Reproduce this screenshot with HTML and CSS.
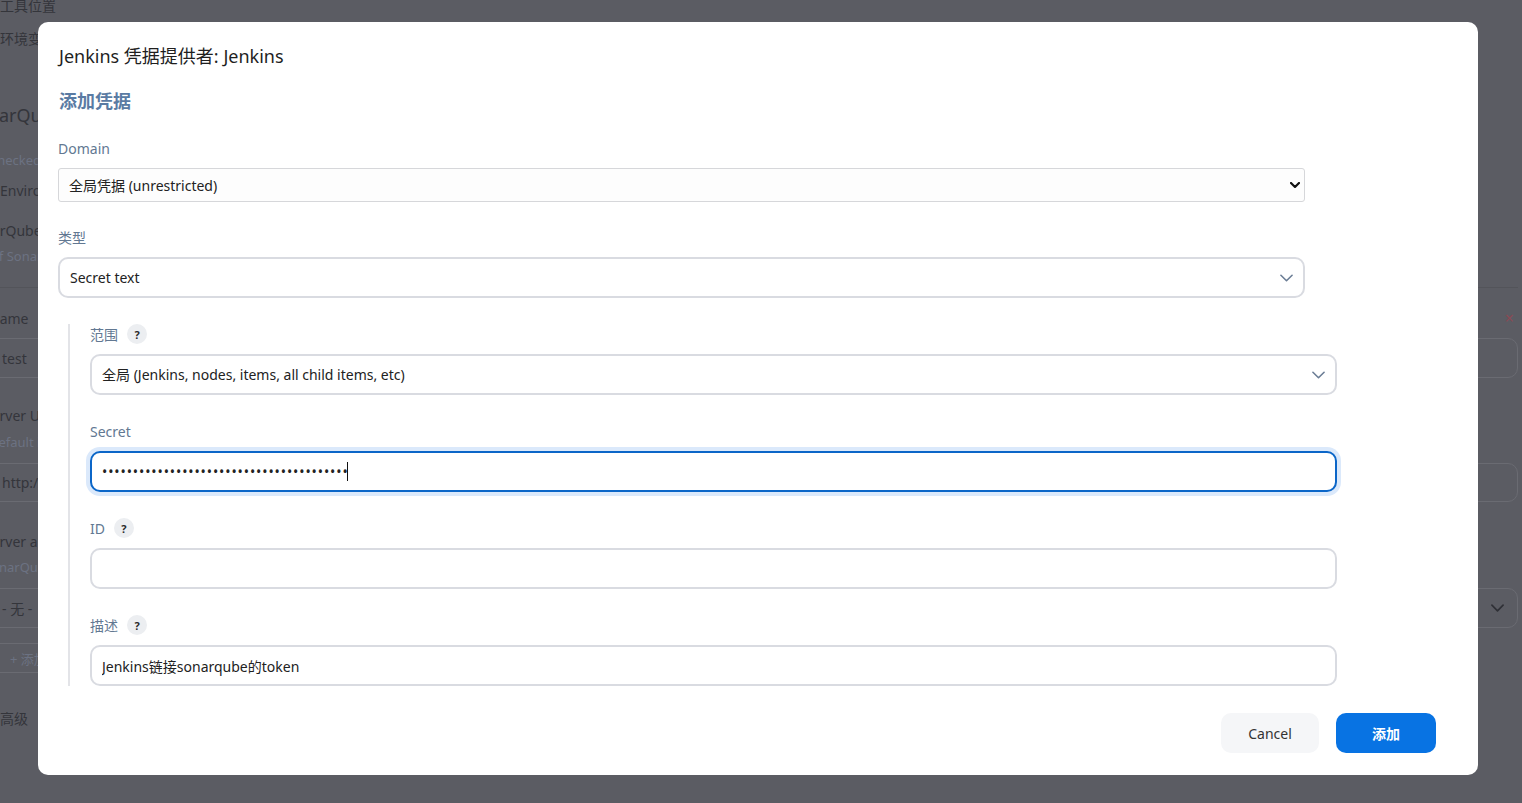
FILE: index.html
```html
<!DOCTYPE html>
<html lang="zh-CN">
<head>
    <meta charset="UTF-8">
    <meta name="viewport" content="width=device-width, initial-scale=1.0">
    <title>添加凭据</title>
    <link rel="stylesheet" href="styles.css">
</head>
<body>
    <!-- 背景のJenkins設定ページ（モーダルの下） -->
    <div class="page">
        <div class="bg-row row-tools"><span class="bg-label">工具位置</span></div>
        <div class="bg-row row-env"><span class="bg-label">环境变量</span></div>
        <div class="bg-row row-sonar"><span class="bg-title cut-l">SonarQube servers</span></div>
        <div class="bg-row row-checked"><span class="bg-desc cut-xs">checked, these</span></div>
        <div class="bg-row row-environ"><span class="bg-label">Environment variables</span></div>
        <div class="bg-row row-install"><span class="bg-label cut-l">SonarQube installations</span></div>
        <div class="bg-row row-list"><span class="bg-desc cut-xs">of SonarQube</span></div>
        <div class="bg-divider"></div>
        <div class="bg-row row-name">
            <span class="bg-label cut-s">Name</span>
            <span class="bg-close">×</span>
        </div>
        <div class="bg-row row-box">
            <span class="bg-box left">test</span>
            <span class="bg-box right"></span>
        </div>
        <div class="bg-row row-url"><span class="bg-label cut-m">Server URL</span></div>
        <div class="bg-row row-default"><span class="bg-desc cut-s">Default is</span></div>
        <div class="bg-row row-box2">
            <span class="bg-box left">http://</span>
            <span class="bg-box right"></span>
        </div>
        <div class="bg-row row-token"><span class="bg-label cut-m">Server authentication token</span></div>
        <div class="bg-row row-token-desc"><span class="bg-desc cut-m">SonarQube authentication</span></div>
        <div class="bg-row row-box3">
            <span class="bg-box left">- 无 -</span>
            <span class="bg-box right">
                <svg width="13" height="8" viewBox="0 0 14 8"><path d="M1 1l6 6 6-6" fill="none" stroke="#2f3036" stroke-width="1.8" stroke-linecap="round" stroke-linejoin="round"/></svg>
            </span>
        </div>
        <div class="bg-row row-add"><span class="bg-btn">+ 添加</span></div>
        <div class="bg-row row-adv"><span class="bg-label">高级</span></div>
    </div>

    <div class="dialog">
        <h1 class="dialog-title">Jenkins 凭据提供者: Jenkins</h1>
        <h2 class="dialog-heading">添加凭据</h2>

        <div class="field">
            <div class="field-label">Domain</div>
            <div class="select-wrap">
                <select class="plain-select">
                    <option>全局凭据 (unrestricted)</option>
                </select>
                <svg class="chevron-bold" width="10" height="6" viewBox="0 0 10 6"><path d="M1 1l4 4 4-4" fill="none" stroke="#111" stroke-width="2.2" stroke-linecap="round" stroke-linejoin="round"/></svg>
            </div>
        </div>

        <div class="field">
            <div class="field-label">类型</div>
            <div class="select-wrap">
                <select class="select">
                    <option>Secret text</option>
                </select>
                <svg class="chevron" width="13" height="8" viewBox="0 0 14 8"><path d="M1 1l6 6 6-6" fill="none" stroke="#6b7d95" stroke-width="1.7" stroke-linecap="round" stroke-linejoin="round"/></svg>
            </div>
        </div>

        <div class="nested">
            <div class="field">
                <div class="field-label">范围 <span class="help">?</span></div>
                <div class="select-wrap">
                    <select class="select">
                        <option>全局 (Jenkins, nodes, items, all child items, etc)</option>
                    </select>
                    <svg class="chevron" width="13" height="8" viewBox="0 0 14 8"><path d="M1 1l6 6 6-6" fill="none" stroke="#6b7d95" stroke-width="1.7" stroke-linecap="round" stroke-linejoin="round"/></svg>
                </div>
            </div>

            <div class="field">
                <div class="field-label">Secret</div>
                <div class="input-wrap">
                    <input class="input is-focused" type="password" value="sqa_3f9c2a7d1e8b4c6f0a5d9e2b7c1f4a8d6e3b">
                    <span class="caret"></span>
                </div>
            </div>

            <div class="field">
                <div class="field-label">ID <span class="help">?</span></div>
                <input class="input" type="text" value="">
            </div>

            <div class="field last">
                <div class="field-label">描述 <span class="help">?</span></div>
                <input class="input" type="text" value="Jenkins链接sonarqube的token">
            </div>
        </div>

        <div class="dialog-buttons">
            <button class="btn btn-cancel">Cancel</button>
            <button class="btn btn-primary">添加</button>
        </div>
    </div>
</body>
</html>
```

FILE: styles.css
```css
* {
    box-sizing: border-box;
}

body {
    margin: 0;
    height: 803px;
    overflow: hidden;
    position: relative;
    background-color: #5b5c63;
    font-family: "Noto Sans", "Noto Sans CJK SC", sans-serif;
    font-size: 14px;
}

/* 背景ページ */
.page {
    padding-right: 4px;
}

.bg-row {
    display: flex;
    justify-content: space-between;
    align-items: center;
    height: 24px;
    white-space: nowrap;
    color: #34353b;
}

.bg-label {
    font-size: 14px;
}

.bg-title {
    font-size: 18px;
}

.bg-desc {
    font-size: 13px;
    color: #6c7282;
}

.cut-xs { margin-left: -9px; }
.cut-s { margin-left: -11px; }
.cut-m { margin-left: -16px; }
.cut-l { margin-left: -33px; }

.row-tools { margin-top: -7px; }
.row-env { margin-top: 9px; }
.row-sonar { margin-top: 53px; }
.row-checked { margin-top: 21px; }
.row-environ { margin-top: 6px; }
.row-install { margin-top: 16px; }
.row-list { margin-top: 2px; }
.row-name { margin-top: 18px; }
.row-url { margin-top: 25px; }
.row-default { margin-top: 3px; }
.row-token { margin-top: 27px; }
.row-token-desc { margin-top: 2px; }
.row-add { margin-top: 15px; height: 30px; }
.row-adv { margin-top: 33px; }

.row-box, .row-box2, .row-box3 {
    height: 40px;
}

.row-box { margin-top: 8px; }
.row-box2 { margin-top: 9px; height: 39px; }
.row-box3 { margin-top: 9px; }

.bg-divider {
    margin-top: 19px;
    height: 1px;
    background-color: #53545a;
}

.bg-close {
    color: #8a4a55;
    font-size: 16px;
    margin-right: 4px;
}

.bg-box {
    height: 100%;
    width: 220px;
    display: flex;
    align-items: center;
    border: 1px solid #6a6b72;
    border-radius: 10px;
}

.bg-box.left {
    margin-left: -30px;
    padding-left: 31px;
}

.bg-box.right {
    justify-content: flex-end;
    padding-right: 13px;
}

.bg-btn {
    height: 100%;
    width: 200px;
    margin-left: -20px;
    padding-left: 30px;
    display: flex;
    align-items: center;
    border-top: 1px solid #6a6b72;
    border-bottom: 1px solid #6a6b72;
    color: #6c7282;
    font-size: 13px;
}

/* ダイアログ */
.dialog {
    position: absolute;
    left: 38px;
    top: 22px;
    width: 1440px;
    height: 753px;
    background-color: #fff;
    border-radius: 10px;
    padding: 22px 42px 22px 20px;
}

.dialog-title {
    margin: 0 0 21px 1px;
    font-size: 18px;
    line-height: 24px;
    font-weight: 400;
    color: #1f1f1f;
}

.dialog-heading {
    margin: 0 0 25px 1px;
    font-size: 18px;
    line-height: 24px;
    font-weight: 700;
    color: #5a7ba3;
}

.field {
    width: 1247px;
    margin-bottom: 25px;
}

.nested .field {
    margin-bottom: 26px;
}

.nested .field.last {
    margin-bottom: 0;
}

.field-label {
    display: flex;
    align-items: center;
    gap: 9px;
    height: 20px;
    margin-bottom: 10px;
    color: #627892;
    font-size: 14px;
}

.help {
    width: 20px;
    height: 20px;
    border-radius: 50%;
    background-color: #eceef1;
    color: #2a2a2a;
    font-size: 11px;
    font-weight: 700;
    display: flex;
    align-items: center;
    justify-content: center;
}

.select-wrap, .input-wrap {
    position: relative;
}

.plain-select {
    appearance: none;
    width: 100%;
    height: 34px;
    padding: 0 10px;
    border: 1px solid #d6d7da;
    border-radius: 3px;
    background-color: #fdfdfd;
    color: #222;
    font-family: inherit;
    font-size: 14px;
}

.select {
    appearance: none;
    width: 100%;
    height: 41px;
    padding: 0 10px;
    border: 2px solid #d9dbe1;
    border-radius: 10px;
    background-color: #fff;
    color: #222;
    font-family: inherit;
    font-size: 14px;
}

.chevron-bold {
    position: absolute;
    right: 5px;
    top: 14px;
}

.chevron {
    position: absolute;
    right: 12px;
    top: 17px;
}

.nested {
    margin: 26px 0 0 10px;
    padding-left: 20px;
    border-left: 2px solid #e3e4e8;
}

.input {
    display: block;
    width: 100%;
    height: 41px;
    padding: 0 10px;
    border: 2px solid #d9dbe1;
    border-radius: 10px;
    background-color: #fff;
    color: #222;
    font-family: inherit;
    font-size: 14px;
    outline: none;
}

.input.is-focused {
    border-color: #0b66c8;
    box-shadow: 0 0 0 4px #dbe9fb;
    letter-spacing: 0.9px;
}

.caret {
    position: absolute;
    left: 257px;
    top: 11px;
    width: 1px;
    height: 19px;
    background-color: #111;
}

.dialog-buttons {
    display: flex;
    justify-content: flex-end;
    gap: 17px;
    margin-top: 27px;
}

.btn {
    height: 40px;
    border: none;
    border-radius: 10px;
    font-family: inherit;
    font-size: 14px;
    cursor: pointer;
}

.btn-cancel {
    width: 98px;
    background-color: #f5f6f8;
    color: #333;
}

.btn-primary {
    width: 100px;
    background-color: #0873e3;
    color: #fff;
    font-weight: 700;
}
```
